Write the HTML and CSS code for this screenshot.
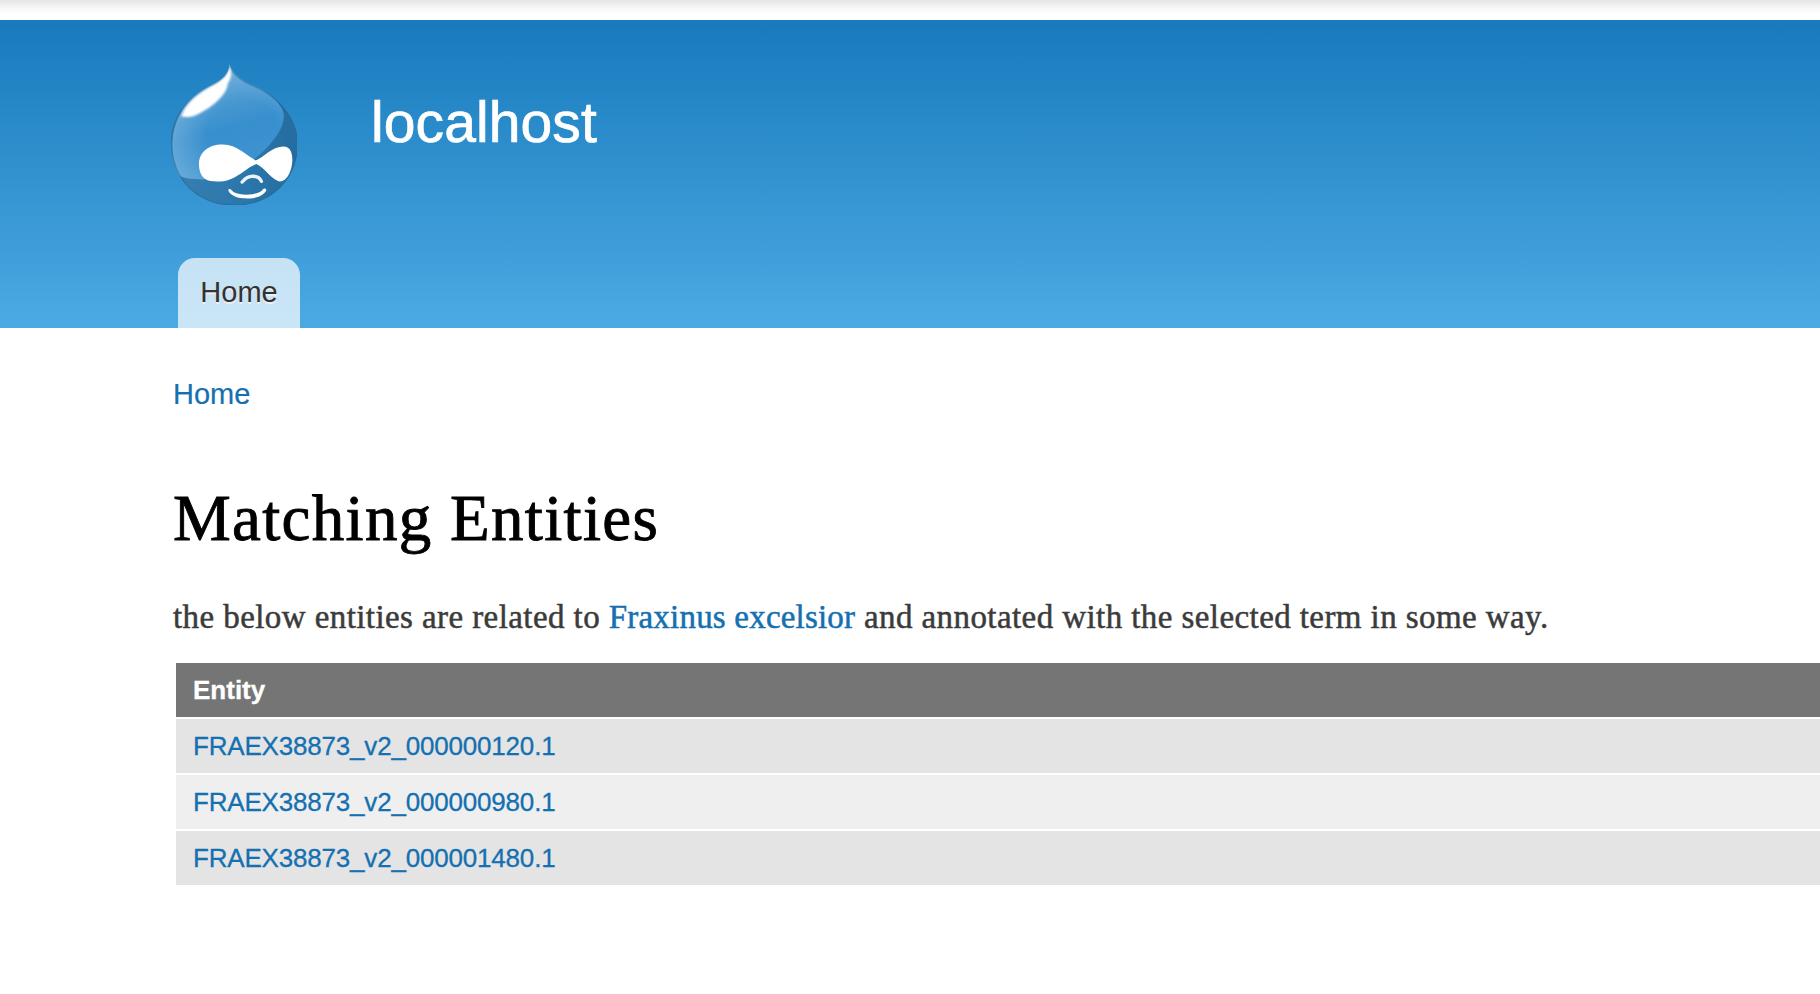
FILE: index.html
```
<!DOCTYPE html>
<html lang="en">
<head>
<meta charset="utf-8">
<title>Matching Entities | localhost</title>
<link rel="stylesheet" href="styles.css">
</head>
<body>
<div class="top-shade"></div>
<header class="header">
  <div class="branding">
    <svg class="logo" viewBox="30 24 382 427" aria-hidden="true">
      <defs>
        <linearGradient id="body" x1="0" y1="0" x2="0.25" y2="1">
          <stop offset="0" stop-color="#78b1da"/>
          <stop offset="0.3" stop-color="#549fd3"/>
          <stop offset="0.65" stop-color="#388fce"/>
          <stop offset="1" stop-color="#3c94d0"/>
        </linearGradient>
        <linearGradient id="shade" x1="0" y1="0" x2="1" y2="0">
          <stop offset="0" stop-color="#397fb0"/>
          <stop offset="0.5" stop-color="#2c78ad"/>
          <stop offset="1" stop-color="#256c9f"/>
        </linearGradient>
        <radialGradient id="rim" gradientUnits="userSpaceOnUse" cx="250" cy="245" r="220">
          <stop offset="0.5" stop-color="#8dc0e3" stop-opacity="0"/>
          <stop offset="1" stop-color="#8dc0e3" stop-opacity="0.5"/>
        </radialGradient>
        <clipPath id="drop"><path d="M209 27C214 51 241 75 278 90C352 119 415 190 415 265C415 375 332 453 225 453C110 453 33 373 33 261C33 186 80 128 151 92C190 73 207 57 209 27Z"/></clipPath>
        <filter id="soft"><feGaussianBlur stdDeviation="3"/></filter>
        <filter id="fine"><feGaussianBlur stdDeviation="1.2"/></filter>
      </defs>
      <g clip-path="url(#drop)">
        <rect x="30" y="20" width="390" height="440" fill="url(#shade)"/>
        <path fill="url(#body)" filter="url(#fine)" d="M209 15L277 88C330 109 367 150 372 177C376 218 340 264 298 301C255 340 198 374 126 374C96 374 72 370 58 364C20 290 25 160 150 88Z"/>
        <path fill="url(#rim)" d="M209 15L277 88C330 109 367 150 372 177C376 218 340 264 298 301C255 340 198 374 126 374C96 374 72 370 58 364C20 290 25 160 150 88Z"/>
        <path fill="none" stroke="#2a6590" stroke-opacity="0.5" stroke-width="7" filter="url(#fine)" d="M209 27C214 51 241 75 278 90C352 119 415 190 415 265C415 375 332 453 225 453C110 453 33 373 33 261C33 186 80 128 151 92C190 73 207 57 209 27Z"/>
        <path fill="#fff" filter="url(#soft)" d="M208 29C217 50 216 70 203 86C205 112 163 153 121 174C99 187 75 189 64 184C73 154 104 121 153 94C188 76 206 60 208 29Z"/>
      </g>
      <g filter="url(#fine)">
        <path fill="#fff" d="M187 269C230 268 260 302 288 317C310 309 336 275 372 275C389 275 398 291 398 314C398 344 384 380 360 380C338 378 314 338 290 328C260 338 226 380 183 380C162 380 147 381 135 372C121 362 117 342 117 326C118 292 147 269 187 269Z"/>
        <path fill="none" stroke="#eef3f7" stroke-width="10" stroke-linecap="round" d="M247 382C264 359 296 359 305 380"/>
        <path fill="#fff" d="M205 405C211 399 216 408 222 413C244 423 286 423 306 408C311 400 318 398 320 407C308 429 278 433 250 431C226 429 208 419 205 405Z"/>
      </g>
    </svg>
    <div class="site-name">localhost</div>
  </div>
  <nav class="menu"><a class="tab" href="#">Home</a></nav>
</header>
<main class="main">
  <nav class="breadcrumb"><a href="#">Home</a></nav>
  <h1 class="title">Matching Entities</h1>
  <p class="intro">the below entities are related to <a href="#">Fraxinus excelsior</a> and annotated with the selected term in some way.</p>
  <table class="entities">
    <thead><tr><th>Entity</th></tr></thead>
    <tbody>
      <tr><td><a href="#">FRAEX38873_v2_000000120.1</a></td></tr>
      <tr><td><a href="#">FRAEX38873_v2_000000980.1</a></td></tr>
      <tr><td><a href="#">FRAEX38873_v2_000001480.1</a></td></tr>
    </tbody>
  </table>
</main>
</body>
</html>
```
FILE: styles.css
```
* { box-sizing: border-box; }
body {
  margin: 0;
  background: #fff;
  color: #3b3b3b;
  font-family: "Liberation Sans", Arial, sans-serif;
  overflow: hidden;
}
a { color: #1470b0; text-decoration: none; }
.top-shade {
  height: 20px;
  background: linear-gradient(#e4e4e4, #f4f4f4 6px, #fff 14px);
}
.header {
  display: flex;
  flex-direction: column;
  justify-content: space-between;
  height: 308px;
  padding: 43px 0 0 170px;
  background: linear-gradient(#187abd, #4caae3);
}
.branding { display: flex; align-items: flex-start; }
.logo { display: block; width: 127px; height: 142px; }
.site-name {
  margin: 27px 0 0 74px;
  color: #fff;
  font-size: 57px;
  line-height: 64px;
  letter-spacing: 0.1px;
  -webkit-text-stroke: 0.7px;
}
.menu { display: flex; padding-left: 8px; }
.tab {
  width: 122px;
  height: 70px;
  border-radius: 17px 17px 0 0;
  background: rgba(255, 255, 255, 0.7);
  color: #333;
  font-size: 29px;
  line-height: 68px;
  text-align: center;
  text-shadow: 0 2px 0 #eee;
}
.main { padding: 46px 0 0 173px; }
.breadcrumb { font-size: 29px; line-height: 40px; }
.breadcrumb a { -webkit-text-stroke: 0.2px; }
.title {
  margin: 66px 0 0;
  color: #000;
  font: 400 65px/76px "Liberation Serif", serif;
  letter-spacing: 1.3px;
  -webkit-text-stroke: 0.9px;
}
.intro {
  margin: 39px 0 0;
  font: 33px/44px "Liberation Serif", serif;
  letter-spacing: 0.42px;
  white-space: nowrap;
  -webkit-text-stroke: 0.5px;
}
.intro a { letter-spacing: 0.2px; }
.entities {
  width: 1660px;
  margin: 22px 0 0 3px;
  border-collapse: separate;
  border-spacing: 0 2px;
  font-size: 26px;
  line-height: 30px;
}
.entities th, .entities td {
  height: 54px;
  padding: 12px 17px;
  text-align: left;
}
.entities th { background: #757575; color: #fff; -webkit-text-stroke: 0.3px; }
.entities td { background: #e4e4e4; letter-spacing: -0.19px; }
.entities td a { -webkit-text-stroke: 0.3px; }
.entities tr:nth-child(even) td { background: #efefef; }
```
